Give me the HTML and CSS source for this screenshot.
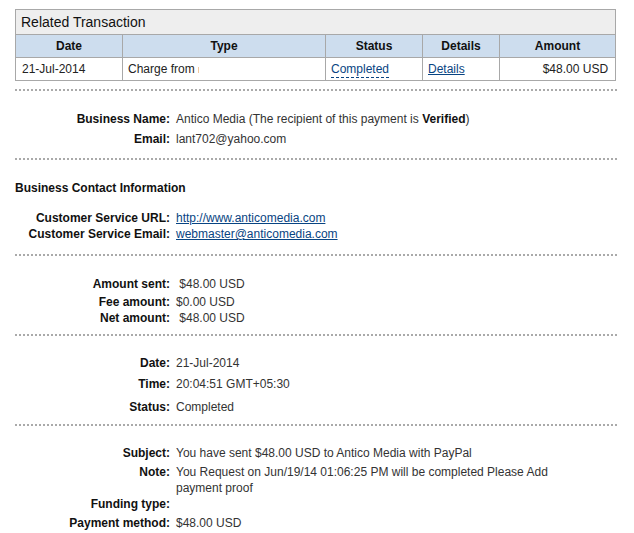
FILE: index.html
```html
<!DOCTYPE html>
<html>
<head>
<meta charset="utf-8">
<link rel="stylesheet" href="styles.css">
</head>
<body>
<div class="page">
  <table class="txn">
    <colgroup>
      <col class="c-date"><col class="c-type"><col class="c-status"><col class="c-details"><col class="c-amount">
    </colgroup>
    <thead>
      <tr><th class="title" colspan="5">Related Transaction</th></tr>
      <tr class="head">
        <th>Date</th><th>Type</th><th>Status</th><th>Details</th><th>Amount</th>
      </tr>
    </thead>
    <tbody>
      <tr>
        <td>21-Jul-2014</td>
        <td>Charge from <span class="cut"></span></td>
        <td><span class="status">Completed</span></td>
        <td><a href="#" class="link">Details</a></td>
        <td class="amt">$48.00 USD</td>
      </tr>
    </tbody>
  </table>

  <div class="section s1">
    <div class="row"><span class="lbl">Business Name:</span><span class="val">Antico Media (The recipient of this payment is <b>Verified</b>)</span></div>
    <div class="row g4"><span class="lbl">Email:</span><span class="val">lant702@yahoo.com</span></div>
  </div>

  <div class="section s2">
    <div class="heading">Business Contact Information</div>
    <div class="row g14"><span class="lbl">Customer Service URL:</span><span class="val"><a href="#" class="link">http://www.anticomedia.com</a></span></div>
    <div class="row"><span class="lbl">Customer Service Email:</span><span class="val"><a href="#" class="link">webmaster@anticomedia.com</a></span></div>
  </div>

  <div class="section s3">
    <div class="row"><span class="lbl">Amount sent:</span><span class="val">&nbsp;$48.00 USD</span></div>
    <div class="row g2"><span class="lbl">Fee amount:</span><span class="val">$0.00 USD</span></div>
    <div class="row"><span class="lbl">Net amount:</span><span class="val">&nbsp;$48.00 USD</span></div>
  </div>

  <div class="section s4">
    <div class="row"><span class="lbl">Date:</span><span class="val">21-Jul-2014</span></div>
    <div class="row g5"><span class="lbl">Time:</span><span class="val">20:04:51 GMT+05:30</span></div>
    <div class="row g7"><span class="lbl">Status:</span><span class="val">Completed</span></div>
  </div>

  <div class="section s5">
    <div class="row"><span class="lbl">Subject:</span><span class="val">You have sent $48.00 USD to Antico Media with PayPal</span></div>
    <div class="row g3"><span class="lbl">Note:</span><span class="val note">You Request on Jun/19/14 01:06:25 PM will be completed Please Add payment proof</span></div>
    <div class="row"><span class="lbl">Funding type:</span><span class="val"></span></div>
    <div class="row g3"><span class="lbl">Payment method:</span><span class="val">$48.00 USD</span></div>
  </div>
</div>
</body>
</html>
```

FILE: styles.css
```css
html, body {
  margin: 0;
  padding: 0;
  background: #fff;
}
body {
  font-family: Arial, "Liberation Sans", sans-serif;
  font-size: 12px;
  color: #333;
}
.page {
  width: 602px;
  padding: 9px 0 0 15px;
}
.txn {
  width: 600px;
  border-collapse: collapse;
  table-layout: fixed;
}
.c-date { width: 107px; }
.c-type { width: 203px; }
.c-status { width: 97px; }
.c-details { width: 77px; }
.c-amount { width: 116px; }
.txn th, .txn td {
  border: 1px solid #a8a8a8;
  height: 22px;
  padding: 0 6px;
  line-height: 16px;
}
.txn th.title {
  background: #eeeeee;
  text-align: left;
  font-weight: normal;
  font-size: 14px;
  color: #111;
  height: 24px;
  padding: 0 5px;
}
.txn .head th {
  background: #cdddee;
  font-weight: bold;
  color: #111;
  text-align: center;
}
.txn td {
  color: #222;
  padding: 0 7px 0 5px;
}
.txn td:first-child { padding-left: 6px; }
.txn td.amt { text-align: right; }
.cut {
  display: inline-block;
  width: 1px;
  height: 6px;
  background: #f0c8a0;
  vertical-align: middle;
}
.status {
  color: #084482;
  border-bottom: 1px dashed #084482;
  padding-bottom: 1px;
}
.link {
  color: #084482;
  text-decoration: underline;
}
.section {
  border-top: 2px dotted #aaaaaa;
  display: flex;
  flex-direction: column;
}
.s1 { margin-top: 8px; padding: 20px 0 11px; }
.s2 { padding: 20px 0 12px; }
.s3 { padding: 20px 0 8px; }
.s4 { padding: 19px 0 9px; }
.s5 { padding: 19px 0 10px; }
.row {
  display: grid;
  grid-template-columns: 155px 1fr;
  column-gap: 6px;
  line-height: 16px;
}
.g2 { margin-top: 2px; }
.g3 { margin-top: 3px; }
.g4 { margin-top: 4px; }
.g5 { margin-top: 5px; }
.g7 { margin-top: 7px; }
.g14 { margin-top: 14px; }
.lbl {
  text-align: right;
  font-weight: bold;
  color: #111;
}
.val { color: #333; }
.val b { color: #111; }
.note { max-width: 400px; }
.heading {
  font-weight: bold;
  color: #111;
  line-height: 16px;
}
```
